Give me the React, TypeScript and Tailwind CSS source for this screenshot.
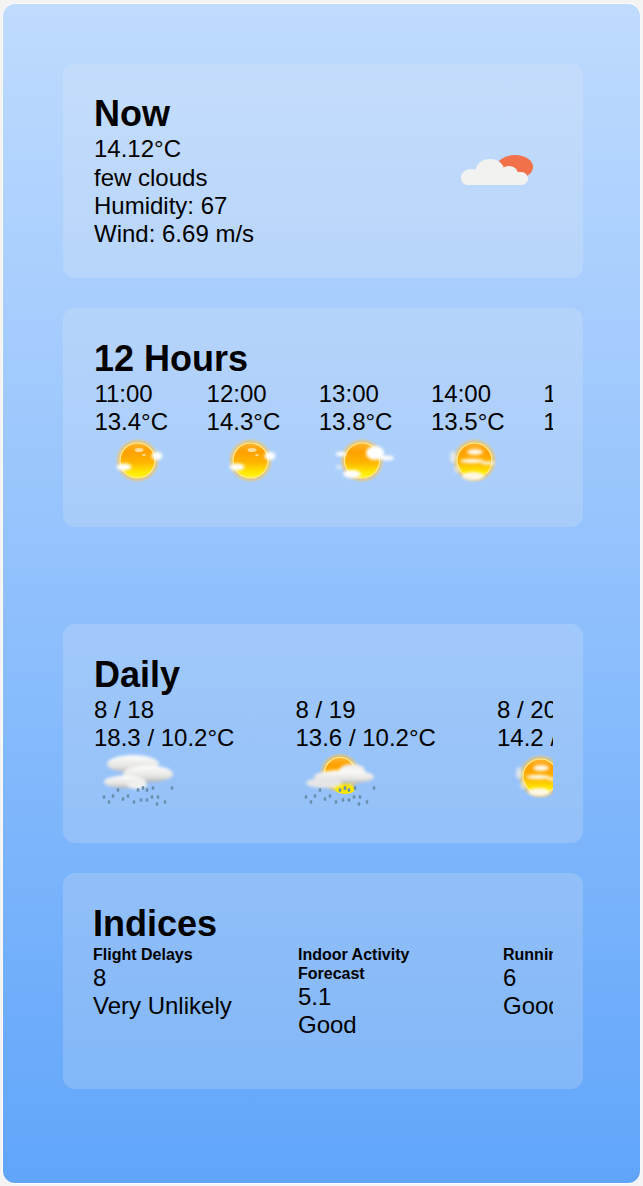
import React from 'react'

const HOURS = [
  { time: '11:00', temp: '13.4°C', kind: 'sun' },
  { time: '12:00', temp: '14.3°C', kind: 'sun' },
  { time: '13:00', temp: '13.8°C', kind: 'partly' },
  { time: '14:00', temp: '13.5°C', kind: 'hazy' },
  { time: '15:00', temp: '13.2°C', kind: 'hazy' },
]

const DAYS = [
  { date: '8 / 18', temp: '18.3 / 10.2°C', kind: 'rain' },
  { date: '8 / 19', temp: '13.6 / 10.2°C', kind: 'storm' },
  { date: '8 / 20', temp: '14.2 / 10.2°C', kind: 'hazy' },
]

const INDICES = [
  { name: 'Flight Delays', score: '8', label: 'Very Unlikely' },
  { name: 'Indoor Activity Forecast', score: '5.1', label: 'Good' },
  { name: 'Running', score: '6', label: 'Good' },
]

const DROPS = [
  [20, 38], [15, 44], [6, 45], [11, 50], [25, 47], [30, 44], [36, 50], [43, 48], [49, 48],
  [40, 38], [45, 36], [49, 38], [55, 36], [60, 45], [67, 50], [59, 52], [74, 36], [54, 45],
]

const SharedDefs = () => (
  <svg width="0" height="0" className="absolute">
    <defs>
      <linearGradient id="sunFill" x1="0" y1="0" x2="0" y2="1">
        <stop offset="0" stopColor="#ffb52e" />
        <stop offset="0.25" stopColor="#ffa000" />
        <stop offset="0.55" stopColor="#ffb400" />
        <stop offset="0.85" stopColor="#ffea00" />
        <stop offset="1" stopColor="#fff430" />
      </linearGradient>
      <radialGradient id="sunGlow">
        <stop offset="0.72" stopColor="#ffb92e" stopOpacity="1" />
        <stop offset="1" stopColor="#ffc94d" stopOpacity="0" />
      </radialGradient>
      <linearGradient id="cloudFill" x1="0" y1="0" x2="0" y2="1">
        <stop offset="0" stopColor="#ffffff" />
        <stop offset="0.65" stopColor="#e4e3e0" />
        <stop offset="1" stopColor="#aeb2b7" />
      </linearGradient>
      <filter id="soft1" x="-40%" y="-40%" width="180%" height="180%">
        <feGaussianBlur stdDeviation="1.6" />
      </filter>
      <filter id="soft2" x="-40%" y="-40%" width="180%" height="180%">
        <feGaussianBlur stdDeviation="0.6" />
      </filter>
    </defs>
  </svg>
)

const Sun = ({ cx = 39.5, cy = 24.5, r = 17.5 }: { cx?: number; cy?: number; r?: number }) => (
  <g>
    <circle cx={cx} cy={cy} r={r + 5} fill="url(#sunGlow)" />
    <circle cx={cx} cy={cy} r={r} fill="url(#sunFill)" stroke="#ffef9a" strokeWidth="1.2" filter="url(#soft2)" />
  </g>
)

const Drops = () => (
  <g filter="url(#soft2)">
    {DROPS.map(([x, y], i) => (
      <ellipse key={i} cx={x} cy={y} rx="1.4" ry="2.1" fill="#6a90ac" />
    ))}
  </g>
)

// weather glyphs, all in the same 80x60 box
const WeatherIcon = ({ kind }: { kind: string }) => (
  <svg viewBox="0 0 80 60" className="w-[80px] h-[60px] ml-[4px] shrink-0 overflow-visible">
    {kind === 'sun' && (
      <g>
        <Sun />
        <g filter="url(#soft2)" fill="#fff3cf" opacity="0.7">
          <ellipse cx="41" cy="14" rx="4.5" ry="2" />
          <ellipse cx="46" cy="19" rx="2" ry="1" />
        </g>
        <g filter="url(#soft1)" fill="#ffffff">
          <ellipse cx="59" cy="20" rx="5.5" ry="4" />
          <ellipse cx="26" cy="31" rx="7.5" ry="3.5" />
        </g>
      </g>
    )}
    {kind === 'partly' && (
      <g>
        <Sun cx={39} />
        <g filter="url(#soft1)" fill="#ffffff">
          <ellipse cx="52" cy="17" rx="9" ry="7" />
          <ellipse cx="64" cy="22" rx="7" ry="2.5" />
          <ellipse cx="18" cy="18" rx="5" ry="2.2" />
          <ellipse cx="29" cy="38" rx="9" ry="4" />
          <ellipse cx="16" cy="31" rx="3" ry="2" opacity="0.6" />
        </g>
      </g>
    )}
    {kind === 'hazy' && (
      <g>
        <Sun />
        <g filter="url(#soft1)" fill="#fff8e8">
          <ellipse cx="40" cy="16" rx="8" ry="3" />
          <ellipse cx="37" cy="25" rx="12" ry="2.2" />
          <ellipse cx="53" cy="27" rx="7" ry="1.6" />
          <ellipse cx="38" cy="40" rx="11" ry="4" />
          <ellipse cx="18" cy="21" rx="3" ry="6" opacity="0.65" />
          <ellipse cx="22" cy="33" rx="2.5" ry="4" opacity="0.5" />
        </g>
      </g>
    )}
    {kind === 'rain' && (
      <g>
        <g filter="url(#soft1)">
          <ellipse cx="35" cy="12" rx="26" ry="9" fill="url(#cloudFill)" />
          <ellipse cx="50" cy="22" rx="25" ry="8.5" fill="url(#cloudFill)" />
          <ellipse cx="27" cy="30" rx="21" ry="6.5" fill="url(#cloudFill)" />
          <ellipse cx="39" cy="33" rx="10" ry="4" fill="#f1f1f0" />
        </g>
        <Drops />
      </g>
    )}
    {kind === 'storm' && (
      <g>
        <Sun cx={40} cy={21} r={15.5} />
        <ellipse cx="45" cy="37" rx="10" ry="5" fill="#ffe800" filter="url(#soft2)" />
        <g filter="url(#soft1)">
          <ellipse cx="52" cy="19" rx="13" ry="7" fill="#f2f1ee" />
          <ellipse cx="44" cy="25" rx="30" ry="7" fill="url(#cloudFill)" />
          <ellipse cx="24" cy="31" rx="18" ry="5" fill="#e6e6e6" />
        </g>
        <path d="M45 33l-3 5 2.5 0-2 4 5-5.5-2.5 0 2-3.5z" fill="#f5d800" />
        <Drops />
      </g>
    )}
  </svg>
)

const NowIcon = () => (
  <svg viewBox="0 0 100 60" className="w-[100px] h-[60px] shrink-0">
    <ellipse cx="62" cy="26" rx="18" ry="12" fill="#f2704a" />
    <g fill="#f2f2f0">
      <rect x="8" y="31" width="67" height="13" rx="6.5" />
      <ellipse cx="37" cy="29" rx="14" ry="11" />
      <ellipse cx="19" cy="36" rx="11" ry="8" />
      <ellipse cx="56" cy="33" rx="9" ry="8" />
    </g>
  </svg>
)

const Panel = ({ className = '', children }: { className?: string; children: React.ReactNode }) => (
  <section className={`bg-[#eeeeee]/20 rounded-xl p-[30px] ${className}`}>{children}</section>
)

const Title = ({ className = '', children }: { className?: string; children: React.ReactNode }) => (
  <h2 className={`text-[36px] leading-[41px] font-bold text-black mb-px ${className}`}>{children}</h2>
)

export default function App() {
  return (
    <div className="w-[643px] h-[1186px] bg-[#f3f3f3] pt-[4px] px-[3px] font-['Liberation_Sans',Arial,sans-serif] text-black text-[24px] leading-[28px] overflow-hidden">
      <SharedDefs />
      <main className="h-[1179px] rounded-xl shadow-[0_0_0_1px_rgba(255,255,255,0.6)] bg-gradient-to-b from-[#bfdbfe] to-[#60a5fa] pt-[60px] pl-[60px] pr-[57px] flex flex-col">
        <Panel className="flex items-start justify-between h-[214px]">
          <div className="-mt-px pl-px">
            <Title>Now</Title>
            <p className="mb-px">14.12°C</p>
            <p>few clouds</p>
            <p>Humidity: 67</p>
            <p>Wind: 6.69 m/s</p>
          </div>
          <div className="self-center">
            <NowIcon />
          </div>
        </Panel>

        <Panel className="mt-[30px] h-[219px]">
          <Title className="pl-px">12 Hours</Title>
          <div className="flex gap-[40.2px] pl-[1.4px] overflow-hidden">
            {HOURS.map((h) => (
              <div key={h.time} className="w-[72px] shrink-0">
                <p>{h.time}</p>
                <p>{h.temp}</p>
                <WeatherIcon kind={h.kind} />
              </div>
            ))}
          </div>
        </Panel>

        <Panel className="mt-[97px] h-[219px]">
          <Title className="pl-px">Daily</Title>
          <div className="flex gap-[61.5px] pl-px overflow-hidden">
            {DAYS.map((d) => (
              <div key={d.date} className="w-[140px] shrink-0">
                <p>{d.date}</p>
                <p className="whitespace-nowrap">{d.temp}</p>
                <WeatherIcon kind={d.kind} />
              </div>
            ))}
          </div>
        </Panel>

        <Panel className="mt-[30px] h-[216px]">
          <Title>Indices</Title>
          <div className="flex gap-[55px] overflow-hidden">
            {INDICES.map((item) => (
              <div key={item.name} className="w-[150px] shrink-0">
                <h3 className="text-[16px] leading-[19px] font-bold">{item.name}</h3>
                <p>{item.score}</p>
                <p>{item.label}</p>
              </div>
            ))}
          </div>
        </Panel>
      </main>
    </div>
  )
}
